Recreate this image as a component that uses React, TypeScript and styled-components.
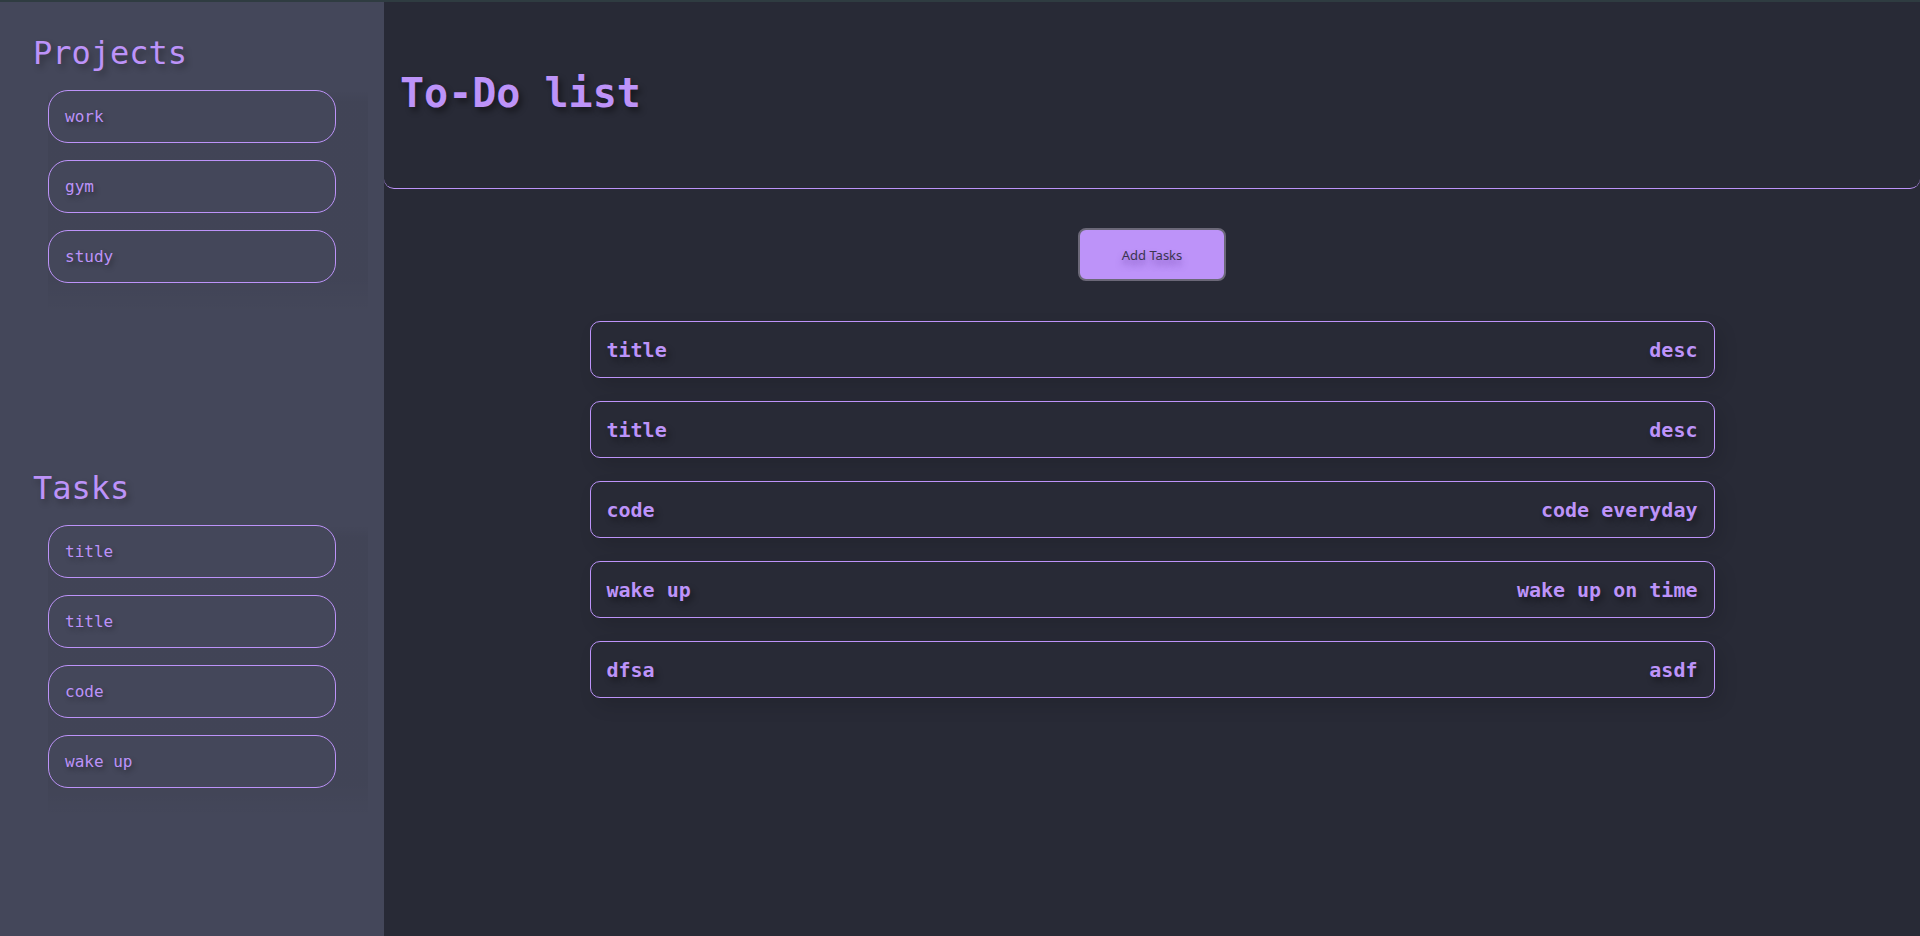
import React from "react";
import styled, { createGlobalStyle } from "styled-components";

const GlobalStyle = createGlobalStyle`
  * { box-sizing: border-box; }
  html, body { margin: 0; padding: 0; background: #282a36; }
  body { font-family: "DejaVu Sans Mono", "Liberation Mono", monospace; }
`;

const Page = styled.div`
  display: grid;
  grid-template-columns: 384px 1fr;
  min-height: 936px;
  border-top: 2px solid #2f3c41;
  background: #282a36;
`;

const Sidebar = styled.aside`
  background: #44475a;
  padding: 33px 0 0 33px;
  display: flex;
  flex-direction: column;
`;

const Section = styled.section<{ $top: number }>`
  display: flex;
  flex-direction: column;
  margin-top: ${(p) => p.$top}px;
`;

const SideHeading = styled.h2`
  margin: 0;
  font-size: 32px;
  line-height: 37px;
  font-weight: 400;
  color: #bd93f9;
  text-shadow: 3px 4px 6px rgba(0, 0, 0, 0.3);
`;

const SideList = styled.ul`
  list-style: none;
  margin: 18px 0 0 15px;
  padding: 0 16px 30px 0;
  width: 320px;
  display: flex;
  flex-direction: column;
  gap: 17px;
  background: linear-gradient(
    to bottom,
    rgba(0, 0, 0, 0) 0px,
    rgba(0, 0, 0, 0.045) 12px,
    rgba(0, 0, 0, 0.045) calc(100% - 34px),
    rgba(0, 0, 0, 0) 100%
  );
`;

const SideItem = styled.li`
  width: 288px;
  height: 53px;
  border: 1px solid #bd93f9;
  border-radius: 20px;
  background: #44475a;
  display: flex;
  align-items: center;
  padding-left: 16px;
  font-size: 16px;
  color: #bd93f9;
  text-shadow: 2px 3px 5px rgba(0, 0, 0, 0.35);
`;

const Main = styled.main`
  display: flex;
  flex-direction: column;
  align-items: center;
`;

const Header = styled.header`
  align-self: stretch;
  height: 187px;
  border-bottom: 1px solid #bd93f9;
  border-radius: 0 0 10px 10px;
  padding: 68px 0 0 16px;
`;

const Title = styled.h1`
  margin: 0;
  font-size: 40px;
  line-height: 46px;
  font-weight: 700;
  color: #bd93f9;
  text-shadow: 3px 4px 6px rgba(0, 0, 0, 0.45);
`;

const AddButton = styled.button`
  margin-top: 39px;
  width: 148px;
  height: 53px;
  border: 2px solid #6b6878;
  border-radius: 8px;
  background: #bd93f9;
  color: #3b3550;
  font-family: "Noto Sans", "Open Sans", sans-serif;
  font-size: 13px;
  text-shadow: 0 5px 6px rgba(90, 50, 150, 0.55);
  cursor: pointer;
`;

const TaskList = styled.div`
  margin-top: 40px;
  width: 1125px;
  display: flex;
  flex-direction: column;
  gap: 23px;
`;

const TaskRow = styled.div`
  height: 57px;
  border: 1px solid #bd93f9;
  border-radius: 10px;
  display: flex;
  align-items: center;
  justify-content: space-between;
  padding: 0 16px 0 16px;
  box-shadow: 6px 8px 18px rgba(0, 0, 0, 0.12);
  font-size: 20px;
  font-weight: 700;
  color: #bd93f9;
  text-shadow: 3px 4px 6px rgba(0, 0, 0, 0.4);
`;

const projects = ["work", "gym", "study"];
const sideTasks = ["title", "title", "code", "wake up"];
const tasks = [
  { title: "title", desc: "desc" },
  { title: "title", desc: "desc" },
  { title: "code", desc: "code everyday" },
  { title: "wake up", desc: "wake up on time" },
  { title: "dfsa", desc: "asdf" },
];

export default function App() {
  return (
    <>
      <GlobalStyle />
      <Page>
        <Sidebar>
          <Section $top={0}>
            <SideHeading>Projects</SideHeading>
            <SideList>
              {projects.map((p, i) => (
                <SideItem key={i}>{p}</SideItem>
              ))}
            </SideList>
          </Section>
          <Section $top={157}>
            <SideHeading>Tasks</SideHeading>
            <SideList>
              {sideTasks.map((t, i) => (
                <SideItem key={i}>{t}</SideItem>
              ))}
            </SideList>
          </Section>
        </Sidebar>
        <Main>
          <Header>
            <Title>To-Do list</Title>
          </Header>
          <AddButton>Add Tasks</AddButton>
          <TaskList>
            {tasks.map((t, i) => (
              <TaskRow key={i}>
                <span>{t.title}</span>
                <span>{t.desc}</span>
              </TaskRow>
            ))}
          </TaskList>
        </Main>
      </Page>
    </>
  );
}
